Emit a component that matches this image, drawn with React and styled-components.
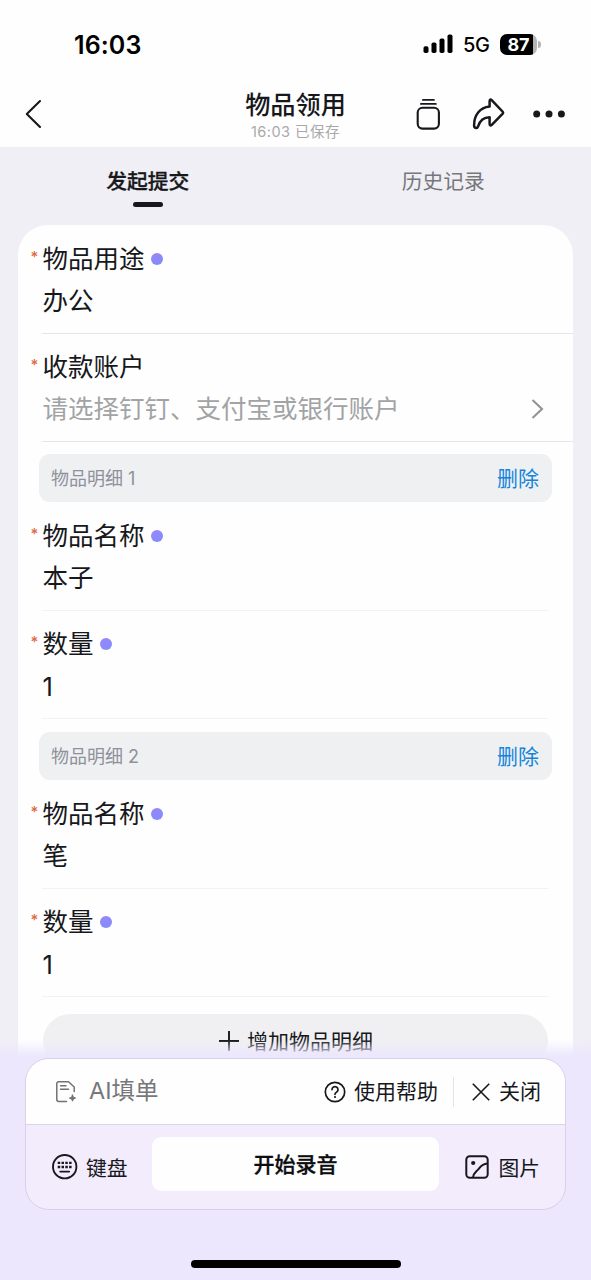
import React from 'react';

import styled, { createGlobalStyle } from 'styled-components';

const colors = {
  ink: '#17181c',
  muted: '#77777b',
  placeholder: '#a2a3a5',
  line: '#e6e6e9',
  lineLight: '#f2f2f4',
  page: '#f0eff5',
  sheet: '#ece7fd',
  link: '#1485dc',
};

const GlobalStyle = createGlobalStyle`
  * {
    box-sizing: border-box;
  }

  body {
    margin: 0;
    color: ${colors.ink};
    font-family: Inter, 'Noto Sans CJK SC', sans-serif;
    font-weight: 370;
  }

  button {
    background: none;
    border: 0;
    color: inherit;
    font: inherit;
    padding: 0;
  }

  svg {
    display: block;
    flex: none;
  }
`;

const Screen = styled.div`
  background: ${colors.page};
  display: flex;
  flex-direction: column;
  height: 1280px;
  overflow: hidden;
  position: relative;
  width: 591px;
`;

const StatusBar = styled.div`
  align-items: center;
  background: #fefefe;
  color: #000;
  display: flex;
  flex: none;
  height: 80px;
  justify-content: space-between;
  padding: 8px 50px 0 74px;
`;

const Clock = styled.span`
  font-size: 25px;
  font-weight: 600;
  letter-spacing: 0.1px;
  padding-top: 1px;
`;

const StatusIcons = styled.div`
  align-items: center;
  display: flex;
`;

const Network = styled.span`
  font-size: 20px;
  font-weight: 500;
  letter-spacing: -0.3px;
  margin: 2px 0 0 10px;
  width: 28px;
`;

const Battery = styled.span`
  align-items: center;
  background: linear-gradient(90deg, #000 33px, #b5b5b5 33px);
  border-radius: 7px;
  color: #fff;
  display: flex;
  font-size: 18px;
  font-weight: 700;
  height: 21px;
  justify-content: center;
  margin-left: 9px;
  width: 37px;
`;

const BatteryCap = styled.span`
  background: #b5b5b5;
  border-radius: 0 3px 3px 0;
  height: 7px;
  margin-left: 1px;
  width: 3px;
`;

const NavBar = styled.header`
  align-items: center;
  background: #fefefe;
  display: grid;
  flex: none;
  grid-template-columns: 180px 1fr 180px;
  height: 67px;
  padding: 0 25px;
`;

const TitleBlock = styled.div`
  padding-top: 2px;
  text-align: center;
`;

const Title = styled.h1`
  font-size: 25.2px;
  font-weight: 500;
  line-height: 34px;
  margin: 0;
`;

const Subtitle = styled.p`
  color: #a9a9ab;
  font-size: 14.5px;
  letter-spacing: 0.5px;
  line-height: 20px;
  margin: 0;
`;

const NavActions = styled.div`
  align-items: center;
  display: flex;
  gap: 32px;
  justify-content: flex-end;

  > :last-child {
    margin-left: -4px;
  }
`;

const Tabs = styled.nav`
  display: grid;
  flex: none;
  grid-template-columns: 1fr 1fr;
  height: 78px;
`;

const Tab = styled.button`
  align-items: center;
  color: ${({ $active }) => ($active ? colors.ink : colors.muted)};
  display: flex;
  flex-direction: column;
  font-size: 20.8px;
  font-weight: ${({ $active }) => ($active ? 500 : 370)};
  line-height: 32px;
  padding-top: 19px;
  -webkit-text-stroke: ${({ $active }) => ($active ? '0.3px' : '0')};

  &::after {
    background: ${({ $active }) => ($active ? colors.ink : 'transparent')};
    border-radius: 3px;
    content: '';
    height: 5px;
    margin-top: 4px;
    width: 30px;
  }
`;

const FormCard = styled.main`
  background: #fefefe;
  border-radius: 30px 30px 0 0;
  flex: 1;
  margin: 0 18px;
  padding: 1px 0 0 24px;
`;

const FieldRow = styled.div`
  border-bottom: 1px solid ${({ $nested }) => ($nested ? colors.lineLight : colors.line)};
  height: 108px;
  margin-right: ${({ $nested }) => ($nested ? '25px' : '0')};
  padding-top: ${({ $nested }) => ($nested ? '12px' : '11.5px')};
`;

const Label = styled.div`
  align-items: center;
  display: flex;
  font-size: 25.5px;
  height: 42px;
  line-height: 42px;
  margin-left: -11.5px;
`;

const Required = styled.span`
  color: #e0693f;
  font-size: 15px;
  font-weight: 500;
  line-height: 20px;
  padding-bottom: 4px;
  width: 12px;
`;

const Dot = styled.span`
  background: linear-gradient(150deg, #9b86f4, #7f8dff);
  border-radius: 50%;
  height: 12px;
  margin-left: 6px;
  width: 12px;
`;

const Value = styled.div`
  align-items: center;
  color: ${({ $placeholder }) => ($placeholder ? colors.placeholder : colors.ink)};
  display: flex;
  font-size: 25.5px;
  height: 42px;
  justify-content: space-between;
  line-height: 42px;
  padding: ${({ $numeric }) => ($numeric ? '2px' : '0')} 29px 0 0.5px;
`;

const GroupHeader = styled.div`
  align-items: center;
  background: #eff0f2;
  border-radius: 11px;
  color: #8d919b;
  display: flex;
  font-size: 18px;
  height: 48px;
  justify-content: space-between;
  margin: 12.4px 21px 1px -3px;
  padding: 0 13px 2px 12px;
`;

const DeleteButton = styled.button`
  color: ${colors.link};
  font-size: 21px;
`;

const AddButton = styled.button`
  align-items: center;
  background: #f0f0f2;
  border-radius: 27px;
  display: flex;
  font-size: 21px;
  gap: 7px;
  height: 54px;
  justify-content: center;
  margin: 17.5px 0 0 1px;
  width: 505px;
`;

const AssistantSheet = styled.div`
  background: linear-gradient(rgba(236, 231, 253, 0), ${colors.sheet} 16px);
  bottom: 0;
  height: 240px;
  left: 0;
  padding: 18px 25px 0;
  position: absolute;
  right: 0;
`;

const Panel = styled.section`
  background: #f2ecfc;
  border: 1px solid #d8d1e9;
  border-radius: 24px;
  height: 152px;
  overflow: hidden;
`;

const PanelTop = styled.div`
  align-items: center;
  background: #fefefe;
  border-bottom: 1px solid #dad4e8;
  display: flex;
  font-size: 21px;
  height: 66px;
  padding: 0 24px 0 29px;
`;

const AssistantName = styled.span`
  color: ${colors.muted};
  font-size: 23.5px;
  margin-left: 12px;
  padding-bottom: 5px;
`;

const PanelAction = styled.button`
  align-items: center;
  display: flex;
  gap: ${({ $gap }) => $gap || 8}px;
  white-space: nowrap;

  ${PanelTop} > &:first-of-type {
    margin-left: auto;
  }
`;

const ActionText = styled.span`
  padding-bottom: ${({ $raise }) => $raise || 0}px;
`;

const Divider = styled.span`
  background: #e3e2e8;
  height: 30px;
  margin: 0 17px 0 15px;
  width: 1px;
`;

const PanelBottom = styled.div`
  display: flex;
  font-size: 20.8px;
  justify-content: space-between;
  padding: 12px 25px 0 26px;

  ${PanelAction} {
    padding-top: 5px;
  }
`;

const RecordButton = styled.button`
  background: #fefefe;
  border-radius: 9px;
  color: #0d0d10;
  font-size: 21px;
  font-weight: 500;
  height: 54px;
  margin-right: 2px;
  padding-bottom: 3px;
  width: 287px;
  -webkit-text-stroke: 0.3px;
`;

const HomeIndicator = styled.div`
  background: #000;
  border-radius: 4px;
  height: 8px;
  margin: 50px auto 0;
  width: 210px;
`;

const SignalIcon = () => (
  <svg width="30" height="20" viewBox="0 0 30 20">
    <rect x="0.5" y="12.2" width="5" height="6.8" rx="1.8" />
    <rect x="8.5" y="8.5" width="5" height="10.5" rx="1.8" />
    <rect x="16.5" y="4.5" width="5" height="14.5" rx="1.8" />
    <rect x="24.5" y="0.5" width="5" height="18.5" rx="1.8" />
  </svg>
);

const BackIcon = () => (
  <svg width="17" height="30" viewBox="0 0 17 30" fill="none" stroke="currentColor" strokeWidth="2.1" strokeLinecap="round" strokeLinejoin="round">
    <path d="M15 2 1.8 15 15 28" />
  </svg>
);

const StackIcon = () => (
  <svg width="24" height="32" viewBox="0 0 24 32" fill="none" stroke="currentColor">
    <path d="M6.9 1.9h11M4.9 5.9h15" strokeWidth="1.8" strokeLinecap="round" />
    <rect x="1.7" y="9.8" width="21.2" height="20.8" rx="4.8" strokeWidth="2.1" />
  </svg>
);

const ShareIcon = () => (
  <svg width="33" height="32" viewBox="0 0 33 32" fill="none" stroke="currentColor" strokeWidth="2.5" strokeLinejoin="round">
    <path d="M17.600 8.600V3.200q0-2.800 2.300-.9l10.600 11.200q1.100 1.200 0 2.400L20 26.700q-2.400 1.900-2.400-.9v-6.600c-5 0-9.600 3-11.500 9.200-.8 2.600-4 2.100-4-.8C2 17.200 7.800 9.600 17.600 8.600Z" />
  </svg>
);

const MoreIcon = () => (
  <svg width="33" height="8" viewBox="0 0 33 8" fill="currentColor">
    <circle cx="3.7" cy="4" r="3.5" />
    <circle cx="16" cy="4" r="3.5" />
    <circle cx="28.4" cy="4" r="3.5" />
  </svg>
);

const ChevronIcon = () => (
  <svg width="13" height="22" viewBox="0 0 13 22" fill="none" stroke="#929397" strokeWidth="2.1">
    <path d="m1.500 2 9.500 9-9.500 9" />
  </svg>
);

const PlusIcon = () => (
  <svg width="22" height="22" viewBox="0 0 22 22" stroke="currentColor" strokeWidth="1.9">
    <path d="M11 1v20M1 11h20" />
  </svg>
);

const FormIcon = () => (
  <svg width="22" height="22" viewBox="0 0 22 22" fill="none" stroke="#717175" strokeWidth="1.5" strokeLinecap="round" strokeLinejoin="round">
    <path d="M11.500 20.500H3.700A1.900 1.900 0 0 1 1.800 18.600V2.700A1.900 1.900 0 0 1 3.700.8h9.800L19.200 6V10.500M5.500 4.800h5.500M5.500 8.300h8" />
    <path d="m17.500 14 .9 2.200 2.200.9-2.200.9-.9 2.200-.9-2.200-2.200-.9 2.200-.9z" fill="#717175" strokeWidth="1" />
  </svg>
);

const HelpIcon = () => (
  <svg width="22" height="22" viewBox="0 0 22 22" fill="none" stroke="currentColor" strokeWidth="1.7" strokeLinecap="round">
    <circle cx="11" cy="11" r="9.7" />
    <path d="M8 8.600a3 3 0 1 1 4.600 2.500c-1.100.7-1.600 1.100-1.600 2.200" />
    <circle cx="11" cy="16" r="1.1" fill="currentColor" stroke="none" />
  </svg>
);

const CloseIcon = () => (
  <svg width="20" height="20" viewBox="0 0 20 20" stroke="currentColor" strokeWidth="1.6">
    <path d="m1.800 1.800 16.400 16.400m0-16.400L1.800 18.200" />
  </svg>
);

const KeyboardIcon = () => (
  <svg width="26" height="26" viewBox="0 0 26 26" fill="none" stroke="currentColor" strokeWidth="1.9">
    <circle cx="12.700" cy="12.700" r="11.700" />
    <path d="M5.700 8.800h14M5.700 13h14" strokeWidth="2.300" strokeDasharray="2.500 1.300" />
    <path d="M8.200 17.600h9" strokeWidth="1.800" strokeLinecap="round" />
  </svg>
);

const PictureIcon = () => (
  <svg width="24" height="24" viewBox="0 0 24 24" fill="none" stroke="currentColor" strokeWidth="2">
    <rect x="1.300" y="1.300" width="21.400" height="21.400" rx="3.500" />
    <path d="M8 22.500c.4-4.300 2.800-5.300 5-7.800 2.600-3 3.300-5.700 9.500-6.200" />
    <circle cx="8.200" cy="8" r="2.100" fill="currentColor" stroke="none" />
  </svg>
);

const Field = ({ label, value, nested, auto, numeric, placeholder }) => (
  <FieldRow $nested={nested}>
    <Label>
      <Required>*</Required>
      {label}
      {auto && <Dot />}
    </Label>
    <Value $placeholder={!value} $numeric={numeric}>
      {value || placeholder}
      {!value && <ChevronIcon />}
    </Value>
  </FieldRow>
);

const items = [
  { name: '本子', count: '1' },
  { name: '笔', count: '1' },
];

const App = () => (
  <Screen>
    <GlobalStyle />
    <StatusBar>
      <Clock>16:03</Clock>
      <StatusIcons>
        <SignalIcon />
        <Network>5G</Network>
        <Battery>87</Battery>
        <BatteryCap />
      </StatusIcons>
    </StatusBar>
    <NavBar>
      <BackIcon />
      <TitleBlock>
        <Title>物品领用</Title>
        <Subtitle>16:03 已保存</Subtitle>
      </TitleBlock>
      <NavActions>
        <StackIcon />
        <ShareIcon />
        <MoreIcon />
      </NavActions>
    </NavBar>
    <Tabs>
      <Tab $active>发起提交</Tab>
      <Tab>历史记录</Tab>
    </Tabs>
    <FormCard>
      <Field label="物品用途" value="办公" auto />
      <Field label="收款账户" placeholder="请选择钉钉、支付宝或银行账户" />
      {items.map(({ name, count }, index) => (
        <React.Fragment key={name}>
          <GroupHeader>
            <span>物品明细 {index + 1}</span>
            <DeleteButton>删除</DeleteButton>
          </GroupHeader>
          <Field label="物品名称" value={name} nested auto />
          <Field label="数量" value={count} nested auto numeric />
        </React.Fragment>
      ))}
      <AddButton>
        <PlusIcon />
        <ActionText $raise={2}>增加物品明细</ActionText>
      </AddButton>
    </FormCard>
    <AssistantSheet>
      <Panel>
        <PanelTop>
          <FormIcon />
          <AssistantName>AI填单</AssistantName>
          <PanelAction>
            <HelpIcon />
            <ActionText $raise={3}>使用帮助</ActionText>
          </PanelAction>
          <Divider />
          <PanelAction>
            <CloseIcon />
            <ActionText $raise={3}>关闭</ActionText>
          </PanelAction>
        </PanelTop>
        <PanelBottom>
          <PanelAction>
            <KeyboardIcon />
            <ActionText>键盘</ActionText>
          </PanelAction>
          <RecordButton>开始录音</RecordButton>
          <PanelAction $gap={9}>
            <PictureIcon />
            <ActionText>图片</ActionText>
          </PanelAction>
        </PanelBottom>
      </Panel>
      <HomeIndicator />
    </AssistantSheet>
  </Screen>
);

export default App;
